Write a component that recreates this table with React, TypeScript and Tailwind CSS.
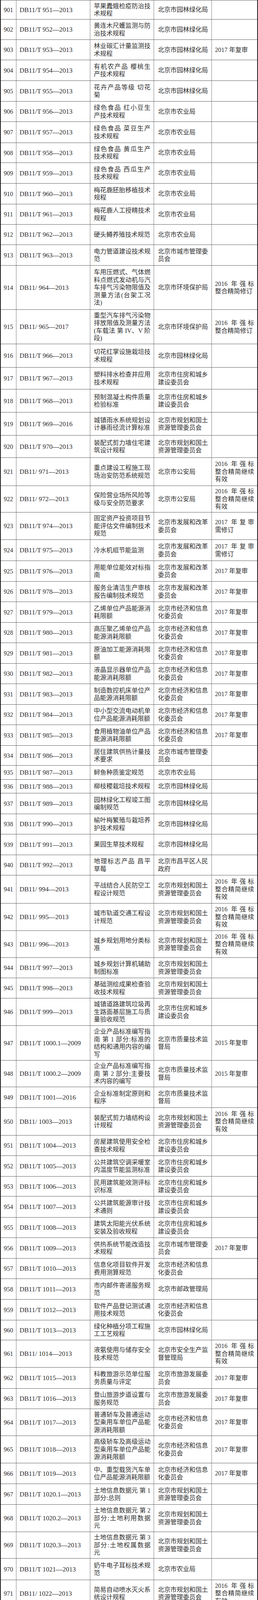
// 北京市地方标准目录 901–1000
const ZY = '北京市园林绿化局'
const NY = '北京市农业局'
const GT = '北京市规划和国土~资源管理委员会'
const ZF = '北京市住房和城乡~建设委员会'
const JX = '北京市经济和信息~化委员会'
const FG = '北京市发展和改革~委员会'
const CG = '北京市城市管理委~员会'
const HB = '北京市环境保护局'
const JT = '北京市交通委员会'
const GA = '北京市公安局'
const ZJ = '北京市质量技术监~督局'
const LY = '北京市旅游发展委~员会'
const QB = '2016 年强标~整合精简继续~有效'
const XD = '2016 年强标~整合精简修订'
const FS = '2017 年复审'
const XS = '2017 年复审~需修订'

// [行高, 编号, 名称, 主管部门, 备注]
const ROWS: [string, string, string, string, string][] = [
  ['h-[50px]', 'DB11/T 951—2013', '苹果蠹蛾检疫防治技~术规程', ZY, ''],
  ['h-[52px]', 'DB11/T 952—2013', '黄连木尺蠖监测与防~治技术规程', ZY, ''],
  ['h-[52px]', 'DB11/T 953—2013', '林业碳汇计量监测技~术规程', ZY, FS],
  ['h-[53px]', 'DB11/T 954—2013', '有机农产品 樱桃生~产技术规程', ZY, ''],
  ['h-[53px]', 'DB11/T 955—2013', '花卉产品等级 切花~菊', ZY, ''],
  ['h-[52px]', 'DB11/T 956—2013', '绿色食品 红小豆生~产技术规程', NY, ''],
  ['h-[54px]', 'DB11/T 957—2013', '绿色食品 菜豆生产~技术规程', NY, ''],
  ['h-[51px]', 'DB11/T 958—2013', '绿色食品 黄瓜生产~技术规程', NY, ''],
  ['h-[53px]', 'DB11/T 959—2013', '绿色食品 西瓜生产~技术规程', NY, ''],
  ['h-[53px]', 'DB11/T 960—2013', '梅花鹿胚胎移植技术~规程', NY, ''],
  ['h-[52px]', 'DB11/T 961—2013', '梅花鹿人工授精技术~规程', NY, ''],
  ['h-[52px]', 'DB11/T 962—2013', '硬头鳟养殖技术规范', NY, ''],
  ['h-[53px]', 'DB11/T 963—2013', '电力管道建设技术规~范', CG, ''],
  ['h-[113px]', 'DB11/ 964—2013', '车用压燃式、气体燃~料点燃式发动机与汽~车排气污染物限值及~测量方法(台架工况~法)', HB, XD],
  ['h-[88px]', 'DB11/ 965—2017', '重型汽车排气污染物~排放限值及测量方法~(车载法 第 IV、V 阶~段)', HB, XD],
  ['h-[60px]', 'DB11/T 966—2013', '切花红掌设施栽培技~术规程', ZY, ''],
  ['h-[56px]', 'DB11/T 967—2013', '塑料排水检查井应用~技术规程', ZF, ''],
  ['h-[59px]', 'DB11/T 968—2013', '预制混凝土构件质量~检验标准', ZF, ''],
  ['h-[59px]', 'DB11/T 969—2016', '城镇雨水系统规划设~计暴雨径流计算标准', GT, ''],
  ['h-[57px]', 'DB11/T 970—2013', '装配式剪力墙住宅建~筑设计规程', GT, ''],
  ['h-[72px]', 'DB11/ 971—2013', '重点建设工程施工现~场治安防范系统规范', GA, QB],
  ['h-[68px]', 'DB11/ 972—2013', '保险营业场所风险等~级与安全防范要求', GA, QB],
  ['h-[70px]', 'DB11/T 974—2013', '固定资产投资项目节~能评估文件编制技术~规范', FG, XS],
  ['h-[54px]', 'DB11/T 975—2013', '冷水机组节能监测', FG, XS],
  ['h-[53px]', 'DB11/T 976—2013', '用能单位能效对标指~南', FG, FS],
  ['h-[52px]', 'DB11/T 978—2013', '服务业清洁生产审核~报告编制技术规范', FG, FS],
  ['h-[53px]', 'DB11/T 979—2013', '乙烯单位产品能源消~耗限额', JX, FS],
  ['h-[52px]', 'DB11/T 980—2013', '高压聚乙烯单位产品~能源消耗限额', JX, FS],
  ['h-[53px]', 'DB11/T 981—2013', '原油加工能源消耗限~额', JX, FS],
  ['h-[52px]', 'DB11/T 982—2013', '液晶显示器单位产品~能源消耗限额', JX, FS],
  ['h-[53px]', 'DB11/T 983—2013', '制造数控机床单位产~品能源消耗限额', JX, FS],
  ['h-[52px]', 'DB11/T 984—2013', '中小型交流电动机单~位产品能源消耗限额', JX, FS],
  ['h-[53px]', 'DB11/T 985—2013', '食用植物油单位产品~能源消耗限额', JX, FS],
  ['h-[51px]', 'DB11/T 986—2013', '居住建筑供热计量技~术要求', CG, ''],
  ['h-[36px]', 'DB11/T 987—2013', '鲟鱼种质鉴定规范', NY, ''],
  ['h-[35px]', 'DB11/T 988—2013', '柳枝稷栽培技术规程', ZY, ''],
  ['h-[53px]', 'DB11/T 989—2013', '园林绿化工程竣工图~编制规范', ZY, ''],
  ['h-[52px]', 'DB11/T 990—2013', '榆叶梅繁殖与栽培养~护技术规程', ZY, ''],
  ['h-[53px]', 'DB11/T 991—2013', '果园生草技术规程', ZY, ''],
  ['h-[52px]', 'DB11/T 992—2013', '地理标志产品 昌平~草莓', '北京市昌平区人民~政府', ''],
  ['h-[72px]', 'DB11/ 994—2013', '平战结合人民防空工~程设计规范', GT, QB],
  ['h-[70px]', 'DB11/ 995—2013', '城市轨道交通工程设~计规范', GT, QB],
  ['h-[69px]', 'DB11/ 996—2013', '城乡规划用地分类标~准', GT, QB],
  ['h-[52px]', 'DB11/T 997—2013', '城乡规划计算机辅助~制图标准', GT, ''],
  ['h-[52px]', 'DB11/T 998—2013', '基础测绘成果检查验~收技术规程', GT, ''],
  ['h-[70px]', 'DB11/T 999—2013', '城镇道路建筑垃圾再~生路面基层施工与质~量验收规范', ZF, ''],
  ['h-[89px]', 'DB11/T 1000.1—2009', '企业产品标准编写指~南 第 1 部分:标准的~结构和通用内容的编~写', ZJ, '2015 年复审'],
  ['h-[68px]', 'DB11/T 1000.2—2009', '企业产品标准编写指~南 第 2 部分:主要技~术内容的编写', ZJ, '2015 年复审'],
  ['h-[53px]', 'DB11/T 1001—2016', '企业标准制定原则和~程序', ZJ, ''],
  ['h-[71px]', 'DB11/ 1003—2013', '装配式剪力墙结构设~计规程', GT, QB],
  ['h-[52px]', 'DB11/T 1004—2013', '房屋建筑使用安全检~查技术规程', ZF, ''],
  ['h-[53px]', 'DB11/T 1005—2013', '公共建筑空调采暖室~内温度节能监测标准', ZF, ''],
  ['h-[51px]', 'DB11/T 1006—2013', '民用建筑能效测评标~识标准', ZF, ''],
  ['h-[54px]', 'DB11/T 1007—2013', '公共建筑能源审计技~术通则', ZF, ''],
  ['h-[52px]', 'DB11/T 1008—2013', '建筑太阳能光伏系统~安装及验收规程', ZF, ''],
  ['h-[53px]', 'DB11/T 1009—2013', '供热系统节能改造技~术规程', CG, FS],
  ['h-[52px]', 'DB11/T 1010—2013', '信息化项目软件开发~费用测算规范', JX, ''],
  ['h-[53px]', 'DB11/T 1011—2013', '市内邮件寄递服务规~范', '北京市邮政管理局', ''],
  ['h-[53px]', 'DB11/T 1012—2013', '软件产品登记测试通~用技术规范', JX, ''],
  ['h-[51px]', 'DB11/T 1013—2013', '绿化种植分项工程施~工工艺规程', ZY, ''],
  ['h-[70px]', 'DB11/ 1014—2013', '液氨使用与储存安全~技术规范', '北京市安全生产监~督管理局', QB],
  ['h-[54px]', 'DB11/T 1015—2013', '科教旅游示范单位服~务质量与评定', LY, FS],
  ['h-[52px]', 'DB11/T 1016—2013', '登山旅游步道设置与~服务规范', LY, FS],
  ['h-[69px]', 'DB11/T 1017—2013', '普通轿车及普通运动~型乘用车单位产品能~源消耗限额', JX, FS],
  ['h-[70px]', 'DB11/T 1018—2013', '高级轿车及高级运动~型乘用车单位产品能~源消耗限额', JX, FS],
  ['h-[53px]', 'DB11/T 1019—2013', '中、重型载货汽车单~位产品能源消耗限额', JX, FS],
  ['h-[53px]', 'DB11/T 1020.1—2013', '土地信息数据元 第 1~部分:总则', GT, ''],
  ['h-[70px]', 'DB11/T 1020.2—2013', '土地信息数据元 第 2~部分:土地利用数据~元', GT, ''],
  ['h-[68px]', 'DB11/T 1020.3—2013', '土地信息数据元 第 3~部分:土地权属数据~元', GT, ''],
  ['h-[55px]', 'DB11/T 1021—2013', '奶牛电子耳标技术规~范', NY, ''],
  ['h-[69px]', 'DB11/ 1022—2013', '简易自动喷水灭火系~统设计规程', GT, QB],
  ['h-[70px]', 'DB11/ 1023—2013', '疏散用门安全控制与~报警逃生门锁系统设~计、施工及验收规程', GT, QB],
  ['h-[70px]', 'DB11/ 1024—2013', '消防安全疏散标志设~置标准', GT, QB],
  ['h-[71px]', 'DB11/ 1025—2013', '自然排烟系统设计、~施工及验收规范', GT, QB],
  ['h-[69px]', 'DB11/ 1026—2013', '吸气式感烟火灾探测~报警系统设计、施工~及验收规范', GT, QB],
  ['h-[70px]', 'DB11/ 1027—2013', '防火玻璃框架系统设~计、施工及验收规范', GT, QB],
  ['h-[69px]', 'DB11/ 1028—2013', '居住建筑门窗工程技~术规范', ZF, QB],
  ['h-[53px]', 'DB11/T 1029—2013', '混凝土矿物掺合料应~用技术规程', ZF, ''],
  ['h-[71px]', 'DB11/T 1030—2013', '装配式混凝土结构工~程施工与质量验收规~程', ZF, ''],
  ['h-[52px]', 'DB11/T 1031—2013', '低层蒸压加气混凝土~承重建筑技术规程', ZF, ''],
  ['h-[53px]', 'DB11/T 1032—2013', '医疗废物一次性包装~箱', HB, FS],
  ['h-[69px]', 'DB11/T 1033—2013', '工业射线探伤辐射安~全和防护分级管理要~求', HB, FS],
  ['h-[72px]', 'DB11/T 1034.1—2013', '交通噪声污染缓解工~程技术规范 第 1 部~分:隔声窗措施', HB, FS],
  ['h-[69px]', 'DB11/T 1034.2—2013', '交通噪声污染缓解工~程技术规范 第 2 部~分:声屏障措施', HB, FS],
  ['h-[53px]', 'DB11/T 1035—2013', '城市轨道交通能源消~耗评价方法', JT, FS],
  ['h-[52px]', 'DB11/T 1036—2013', '公共汽电车能源消耗~评价方法', JT, FS],
  ['h-[52px]', 'DB11/T 1037—2013', '营运货车合理用能指~南', JT, FS],
  ['h-[53px]', 'DB11/T 1038—2013', '在用汽车喷烤漆房安~全使用综合评价规则', JT, ''],
  ['h-[70px]', 'DB11/T 1039—2013', '电子不停车收费系统~电子标签应用技术规~范', JT, ''],
  ['h-[54px]', 'DB11/T 1040—2013', '工业企业清洁生产审~核报告编制技术规范', JX, FS],
  ['h-[51px]', 'DB11/T 1041—2013', '政务办公终端安全管~理规范', JX, ''],
  ['h-[51px]', 'DB11/T 1042—2013', '机动车违法自动记录~系统通用技术条件', GA, ''],
  ['h-[54px]', 'DB11/T 1043—2013', '安全技术防范报警运~营服务通用要求', GA, ''],
  ['h-[53px]', 'DB11/T 1044—2013', '地震应急避难场所运~行管理规范', '北京市地震局', ''],
  ['h-[35px]', 'DB11/T 1045—2013', '白皮松育苗技术规程', ZY, ''],
  ['h-[53px]', 'DB11/T 1046—2013', '百合种球繁育技术规~程', ZY, ''],
  ['h-[51px]', 'DB11/T 1047—2013', '北京果品等级 鲜食~枣', ZY, ''],
  ['h-[53px]', 'DB11/T 1048—2013', '花卉产品等级 盆栽~凤梨', ZY, ''],
  ['h-[52px]', 'DB11/T 1049—2013', '花卉产品等级 切花~百合', ZY, ''],
  ['h-[47px]', 'DB11/T 1050—2013', '梨小食心虫监测与防~治技术规程', ZY, ''],
]

const JUSTIFY = 'whitespace-nowrap text-justify [text-align-last:justify]'
const PLAIN = 'whitespace-nowrap'

function Lines({ text, className }: { text: string; className: string }) {
  const lines = text ? text.split('~') : []
  return (
    <div className={`flex flex-col justify-center overflow-hidden ${className}`}>
      {lines.map((line, i) => (
        <div key={i} className={i < lines.length - 1 ? JUSTIFY : PLAIN}>
          {line}
        </div>
      ))}
    </div>
  )
}

export default function App() {
  return (
    <div className="w-[660px] bg-white border-x-2 border-b-2 border-[#1c1c1c] font-['Liberation_Serif','Noto_Sans_CJK_SC',serif] text-[#2e2e2e]">
      {ROWS.map(([h, code, title, org, note], i) => (
        <div
          key={code}
          className={`flex overflow-hidden ${h} ${i === 0 ? 'border-t border-[#5f5f5f]' : ''} ${
            i === ROWS.length - 1 ? '' : 'border-b border-[#5f5f5f]'
          }`}
        >
          <div className="w-[40px] shrink-0 flex items-center justify-center border-r border-[#7d7d7d] text-[16px] leading-[19px]">
            {901 + i}
          </div>
          <div className="w-[189px] shrink-0 flex items-center pl-[8px] border-r border-[#7d7d7d] text-[17px] leading-[19px] whitespace-nowrap">
            {code}
          </div>
          <Lines
            text={title}
            className="w-[163px] shrink-0 pl-[9px] pr-[8px] border-r border-[#7d7d7d] text-[16px] leading-[19.5px]"
          />
          <Lines
            text={org}
            className="w-[148px] shrink-0 pl-[10px] pr-[9px] border-r border-[#7d7d7d] text-[16px] leading-[19.5px]"
          />
          <Lines text={note} className="flex-1 min-w-0 pl-[8px] pr-[8px] text-[16px] leading-[19.5px]" />
        </div>
      ))}
    </div>
  )
}
